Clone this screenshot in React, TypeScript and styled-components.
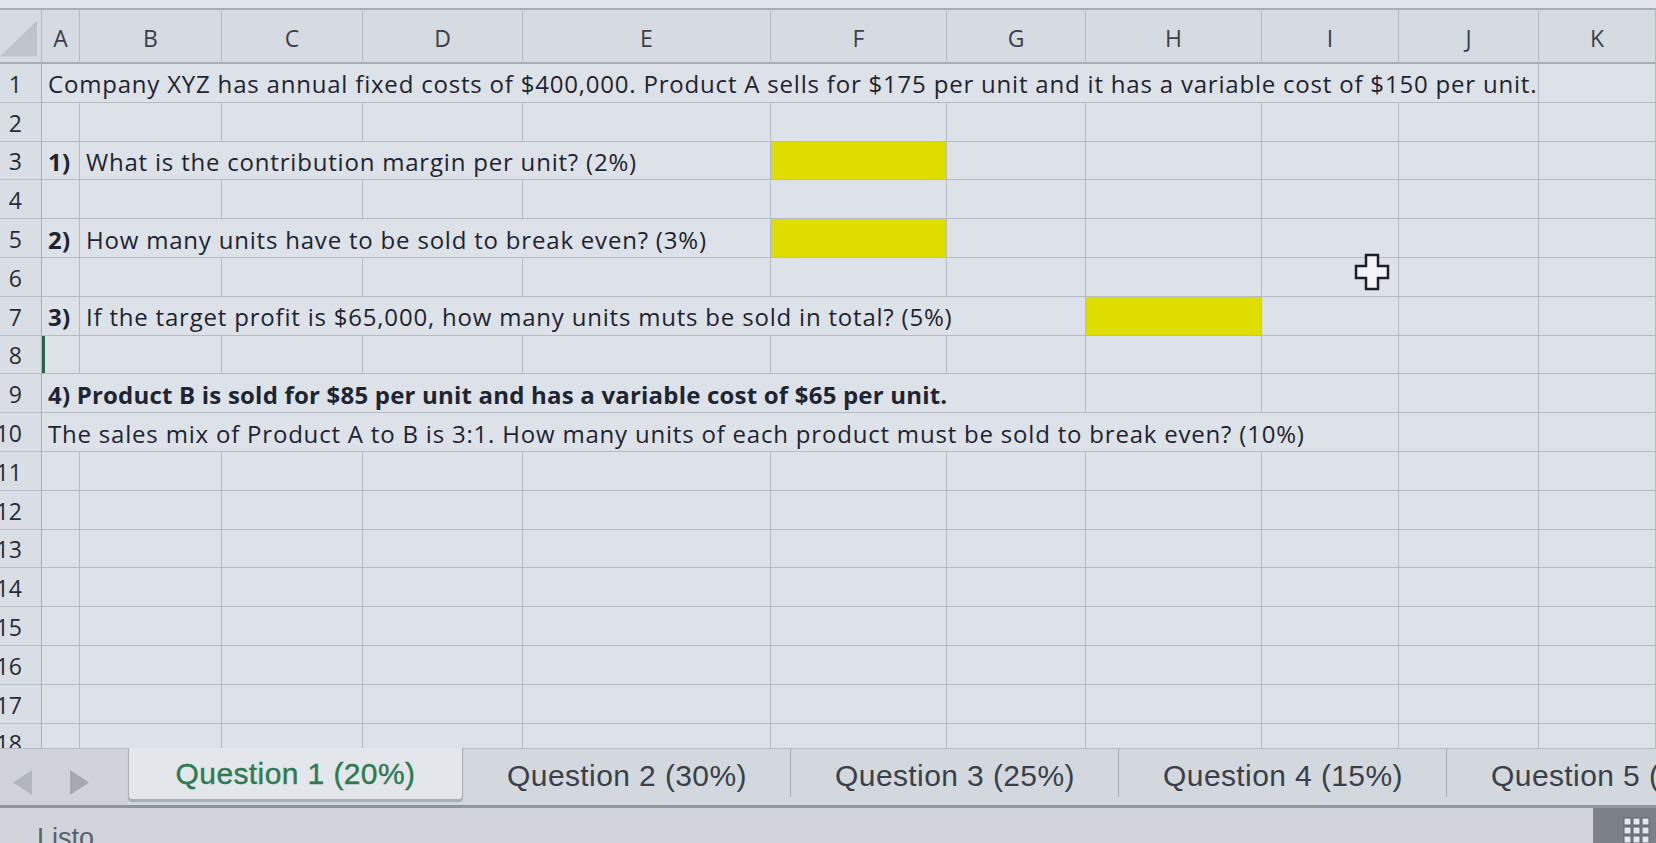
import React from "react";
import styled, { createGlobalStyle } from "styled-components";

const GlobalStyle = createGlobalStyle`
  html, body {
    margin: 0;
    padding: 0;
    background: #dce0e7;
    overflow: hidden;
  }
`;

const COL_WIDTHS = [38, 142, 141, 160, 248, 176, 139, 176, 137, 140];
const LETTERS = "ABCDEFGHIJK".split("");
const ROW_COUNT = 18;

type CellSpec = {
  span?: number;
  text?: string;
  bold?: boolean;
  fill?: boolean;
  marked?: boolean;
};

const SHEET: Record<number, CellSpec[]> = {
  1: [{ span: 10, text: "Company XYZ has annual fixed costs of $400,000. Product A sells for $175 per unit and it has a variable cost of $150 per unit." }],
  3: [{ text: "1)", bold: true }, { span: 4, text: "What is the contribution margin per unit? (2%)" }, { fill: true }],
  5: [{ text: "2)", bold: true }, { span: 4, text: "How many units have to be sold to break even? (3%)" }, { fill: true }],
  7: [{ text: "3)", bold: true }, { span: 6, text: "If the target profit is $65,000, how many units muts be sold in total? (5%)" }, { fill: true }],
  8: [{ marked: true }],
  9: [{ span: 7, bold: true, text: "4) Product B is sold for $85 per unit and has a variable cost of $65 per unit." }],
  10: [{ span: 9, text: "The sales mix of Product A to B is 3:1. How many units of each product must be sold to break even? (10%)" }],
};

const TABS = ["Question 1 (20%)", "Question 2 (30%)", "Question 3 (25%)", "Question 4 (15%)", "Question 5 (10%)"];

function rowCells(n: number): CellSpec[] {
  const out: CellSpec[] = [...(SHEET[n] || [])];
  let used = out.reduce((s, c) => s + (c.span || 1), 0);
  while (used < LETTERS.length) {
    out.push({});
    used++;
  }
  return out;
}

const Page = styled.div`
  position: relative;
  width: 1656px;
  height: 843px;
  overflow: hidden;
  display: flex;
  flex-direction: column;
  background: #dce0e7;
  font-family: "Open Sans", "DejaVu Sans", sans-serif;
  color: #1e2432;
`;

const TopStrip = styled.div`
  height: 8px;
  flex: none;
  background: #e1e4ea;
  border-bottom: 2px solid #a9afb8;
`;

const Sheet = styled.div`
  flex: none;
  height: 738px;
  overflow: hidden;
  display: grid;
  grid-template-columns: 42px ${COL_WIDTHS.map((w) => `${w}px`).join(" ")} 1fr;
  grid-template-rows: 54px;
  grid-auto-rows: 38.8px;
`;

const Corner = styled.div`
  background: #d6dbe2;
  border-right: 1px solid #b3b9c3;
  border-bottom: 2px solid #a7adb7;
  display: flex;
  align-items: flex-end;
  justify-content: flex-end;
  padding: 0 4px 5px 0;
  overflow: hidden;
`;

const ColHead = styled.div`
  background: #d6dbe2;
  border-right: 1px solid #b3b9c3;
  border-bottom: 2px solid #a7adb7;
  display: flex;
  align-items: center;
  justify-content: center;
  padding-top: 4px;
  font-size: 23px;
  color: #3a404a;
`;

const RowHead = styled.div`
  background: #d9dee5;
  border-right: 1px solid #a9afb9;
  border-bottom: 1px solid #b8bec8;
  display: flex;
  align-items: center;
  justify-content: flex-end;
  padding-right: 19px;
  padding-top: 2px;
  overflow: hidden;
  font-size: 23px;
  color: #262b35;
  white-space: nowrap;
`;

const Cell = styled.div<{ $span: number; $fill?: boolean; $bold?: boolean; $marked?: boolean }>`
  grid-column: span ${(p) => p.$span};
  background: ${(p) => (p.$fill ? "#dfdd00" : "#dde1e8")};
  border-right: 1px solid #b6bcc6;
  border-bottom: 1px solid #b6bcc6;
  box-shadow: ${(p) => (p.$marked ? "inset 3px 0 0 #2d6448" : "none")};
  display: flex;
  align-items: center;
  padding-left: 6px;
  padding-top: 2px;
  white-space: nowrap;
  overflow: visible;
  font-size: 24px;
  font-weight: ${(p) => (p.$bold ? 700 : 400)};
  letter-spacing: ${(p) => (p.$bold ? "0.2px" : "0.8px")};
  position: relative;
  z-index: 1;
`;

const TabBar = styled.div`
  flex: none;
  height: 57px;
  display: flex;
  background: #d3d8df;
  border-bottom: 3px solid #8f959e;
  font-family: "Liberation Sans", Arial, sans-serif;
`;

const Arrows = styled.div`
  width: 128px;
  flex: none;
  display: flex;
  align-items: center;
  gap: 38px;
  padding: 10px 0 0 13px;
  box-sizing: border-box;
  background: #d0d4da;
  border-top: 1px solid #b6bcc5;
`;

const Tab = styled.div<{ $active?: boolean }>`
  flex: none;
  width: ${(p) => (p.$active ? "335px" : "328px")};
  box-sizing: border-box;
  display: flex;
  align-items: center;
  justify-content: center;
  padding-top: ${(p) => (p.$active ? "4px" : "2px")};
  font-size: 30px;
  letter-spacing: 0.4px;
  white-space: nowrap;
  color: ${(p) => (p.$active ? "#2f7a52" : "#3a3f48")};
  background: ${(p) => (p.$active ? "#e3e6eb" : "transparent")};
  border: ${(p) => (p.$active ? "1px solid #a9afb7" : "none")};
  border-top: ${(p) => (p.$active ? "none" : "1px solid #b6bcc5")};
  border-radius: 0 0 4px 4px;
  margin-bottom: ${(p) => (p.$active ? "5px" : "0")};
  box-shadow: ${(p) => (p.$active ? "0 2px 1px rgba(90,96,106,0.35)" : "none")};
  position: relative;

  &:not(:last-child)::after {
    content: ${(p) => (p.$active ? "none" : "''")};
    position: absolute;
    right: 0;
    top: 0;
    bottom: 8px;
    width: 1px;
    background: #a7adb5;
  }
`;

const TabLabel = styled.span<{ $active?: boolean }>`
  -webkit-text-stroke: ${(p) => (p.$active ? "0.4px #2f7a52" : "0")};
  padding-bottom: 4px;
`;

const StatusBar = styled.div`
  flex: 1;
  display: flex;
  background: #d1d5db;
  overflow: hidden;
`;

const StatusText = styled.div`
  flex: 1;
  padding: 17px 0 0 37px;
  font-family: "Liberation Sans", Arial, sans-serif;
  font-size: 27px;
  line-height: 27px;
  color: #5b6068;
`;

const ViewButtons = styled.div`
  width: 63px;
  flex: none;
  background: #7c8189;
  display: flex;
  padding: 9px 0 0 30px;
  box-sizing: border-box;
  overflow: hidden;
`;

const Cursor = styled.svg`
  position: absolute;
  left: 1354px;
  top: 253px;
  z-index: 5;
`;

function Triangle({ dir, color }: { dir: "left" | "right"; color: string }) {
  const d = dir === "left" ? "M19 0 L19 25 L0 12.5 Z" : "M0 0 L0 25 L19 12.5 Z";
  return (
    <svg width="19" height="25" viewBox="0 0 19 25">
      <path d={d} fill={color} />
    </svg>
  );
}

function GridIcon() {
  const squares = [];
  for (let r = 0; r < 3; r++) {
    for (let c = 0; c < 3; c++) {
      squares.push(
        <rect key={`${r}-${c}`} x={1 + c * 9} y={1 + r * 9} width={7} height={7} fill="#e4e7eb" stroke="#5f646c" strokeWidth={1} />
      );
    }
  }
  return (
    <svg width="30" height="30" viewBox="0 0 30 30">
      {squares}
    </svg>
  );
}

export default function App() {
  const rows = Array.from({ length: ROW_COUNT }, (_, i) => i + 1);
  return (
    <Page>
      <GlobalStyle />
      <TopStrip />
      <Sheet>
        <Corner>
          <svg width="38" height="37" viewBox="0 0 38 37">
            <path d="M0 37 L38 37 L38 0 Z" fill="#bfc4cc" />
          </svg>
        </Corner>
        {LETTERS.map((l) => (
          <ColHead key={l}>{l}</ColHead>
        ))}
        {rows.map((n) => (
          <React.Fragment key={n}>
            <RowHead>{n}</RowHead>
            {rowCells(n).map((c, i) => (
              <Cell key={i} $span={c.span || 1} $fill={c.fill} $bold={c.bold} $marked={c.marked}>
                {c.text}
              </Cell>
            ))}
          </React.Fragment>
        ))}
      </Sheet>
      <TabBar>
        <Arrows>
          <Triangle dir="left" color="#b2b7be" />
          <Triangle dir="right" color="#a4a9b1" />
        </Arrows>
        {TABS.map((t, i) => (
          <Tab key={t} $active={i === 0}>
            <TabLabel $active={i === 0}>{t}</TabLabel>
          </Tab>
        ))}
      </TabBar>
      <StatusBar>
        <StatusText>Listo</StatusText>
        <ViewButtons>
          <GridIcon />
        </ViewButtons>
      </StatusBar>
      <Cursor width="36" height="38" viewBox="0 0 36 38">
        <path
          d="M12 2 L24 2 L24 13 L34 13 L34 25 L24 25 L24 36 L12 36 L12 25 L2 25 L2 13 L12 13 Z"
          fill="#f4f5f8"
          stroke="#1b1f2a"
          strokeWidth="2.5"
          strokeLinejoin="miter"
        />
      </Cursor>
    </Page>
  );
}
